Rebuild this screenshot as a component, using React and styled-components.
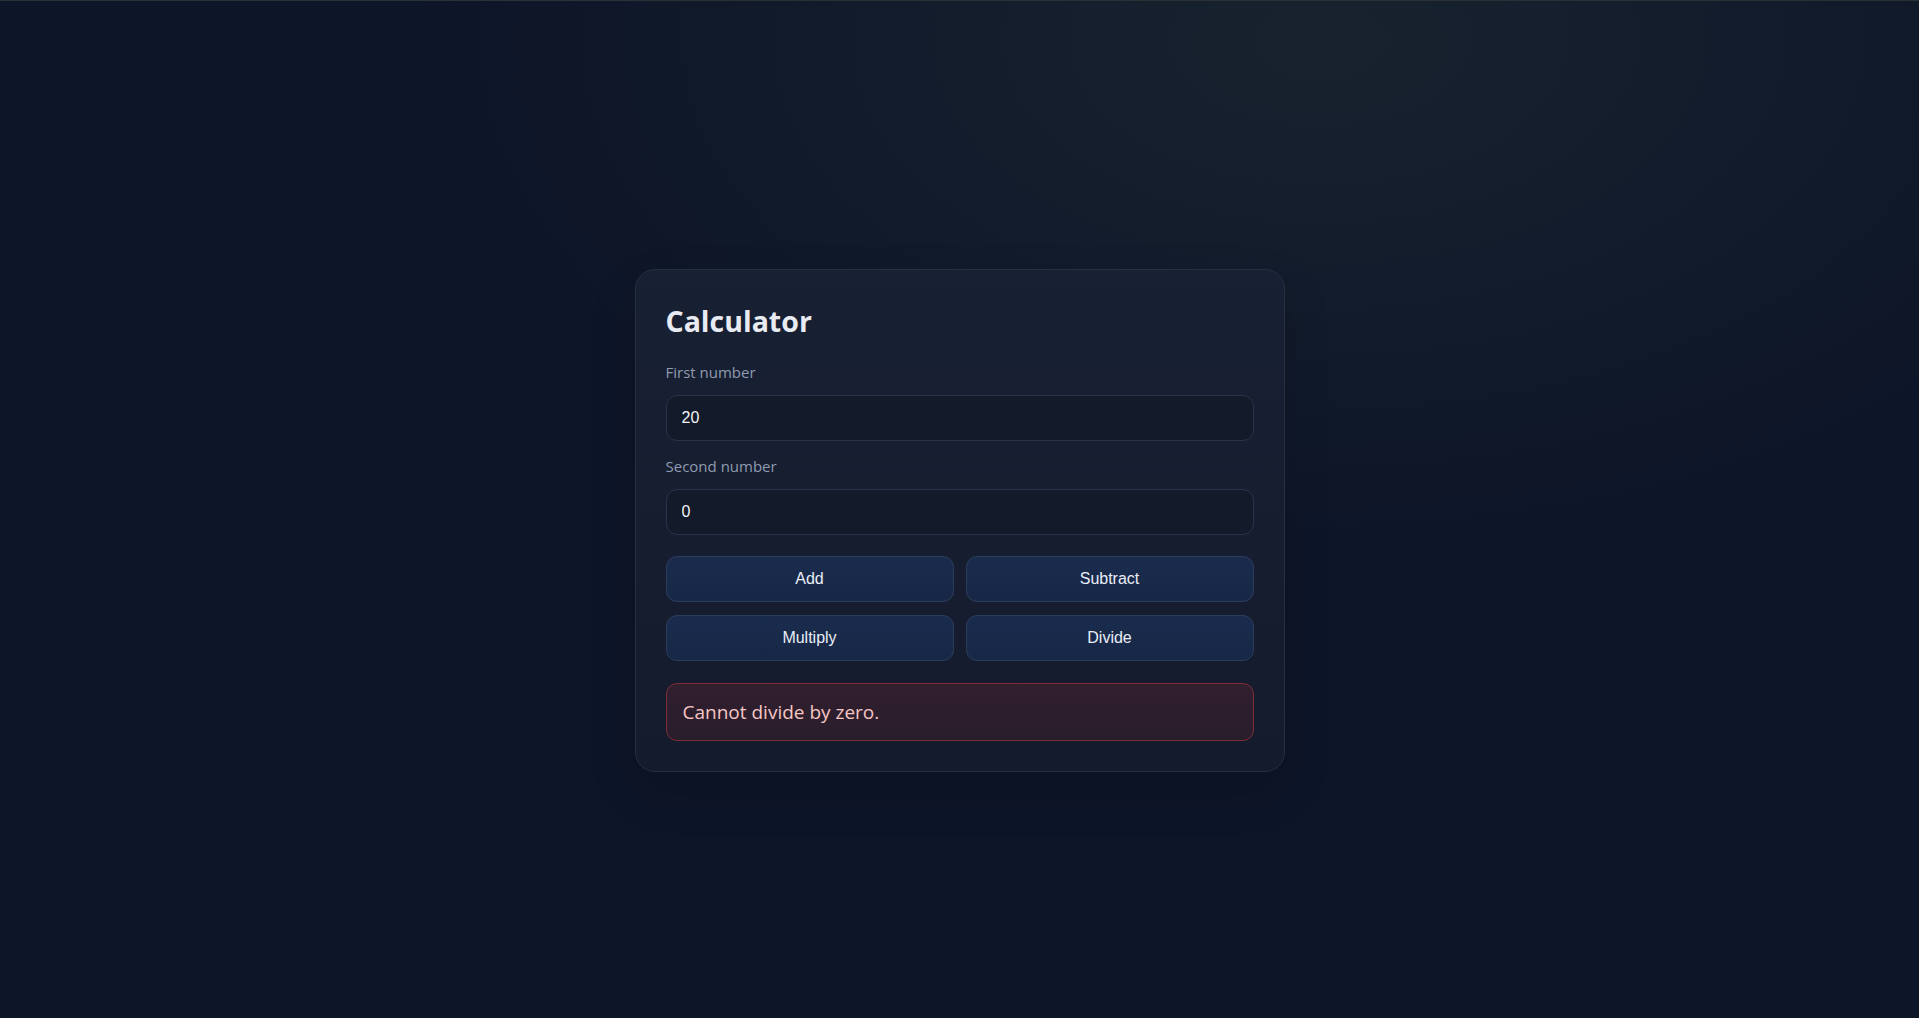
import React, { useState } from 'react';
import styled, { createGlobalStyle } from 'styled-components';

const GlobalStyle = createGlobalStyle`
  html, body {
    margin: 0;
    padding: 0;
  }
  body {
    min-height: 100vh;
    background-color: #0d1528;
    background-image: radial-gradient(ellipse 900px 520px at 1320px 40px, #18232f 0%, rgba(24, 35, 47, 0.55) 40%, rgba(13, 21, 40, 0) 100%);
    border-top: 1px solid #2b2f36;
    box-sizing: border-box;
    font-family: "Segoe UI", "Open Sans", "Noto Sans", sans-serif;
  }
  * {
    box-sizing: border-box;
  }
`;

const Page = styled.main`
  display: flex;
  justify-content: center;
  align-items: flex-start;
  padding-top: 268px;
  min-height: 100vh;
`;

const Card = styled.section`
  width: 650px;
  padding: 30px;
  border: 1px solid #252f40;
  border-radius: 20px;
  background: linear-gradient(180deg, #182033 0%, #141b2d 100%);
  box-shadow: 0 20px 50px rgba(0, 0, 0, 0.12);
`;

const Title = styled.h1`
  margin: 4px 0 24px;
  font-size: 28.5px;
  line-height: 34px;
  font-weight: 700;
  color: #e8ebf1;
`;

const Field = styled.div`
  display: flex;
  flex-direction: column;
  margin-bottom: ${p => p.$last ? '21px' : '15px'};
`;

const Label = styled.label`
  font-size: 15px;
  line-height: 20px;
  color: #8f9bb0;
  margin-bottom: 13px;
`;

const Input = styled.input`
  height: 46px;
  padding: 0 15px;
  border: 1px solid #2b3446;
  border-radius: 11px;
  background: #131a2a;
  color: #f1f4f9;
  font-family: "Liberation Sans", Arial, sans-serif;
  font-size: 16px;
  outline: none;
`;

const Buttons = styled.div`
  display: grid;
  grid-template-columns: 1fr 1fr;
  gap: 13px 12px;
  margin-bottom: 22px;
`;

const OpButton = styled.button`
  height: 46px;
  border: 1px solid #2c3d5b;
  border-radius: 11px;
  background: linear-gradient(180deg, #1a2c4e 0%, #172746 100%);
  color: #e9eef8;
  font-family: "Liberation Sans", Arial, sans-serif;
  font-size: 16px;
  cursor: pointer;
`;

const ErrorBox = styled.div`
  min-height: 58px;
  display: flex;
  align-items: center;
  padding: 0 16px;
  border: 1px solid #7c2d36;
  border-radius: 11px;
  background: linear-gradient(180deg, #311f2e 0%, #291d2c 100%);
  color: #f7c6c3;
  font-size: 19px;
`;

export default function App() {
  const [a, setA] = useState('20');
  const [b, setB] = useState('0');
  const [result, setResult] = useState({ error: 'Cannot divide by zero.' });

  const run = (op) => {
    const x = parseFloat(a);
    const y = parseFloat(b);
    if (op === 'div' && y === 0) {
      setResult({ error: 'Cannot divide by zero.' });
      return;
    }
    const value = op === 'add' ? x + y : op === 'sub' ? x - y : op === 'mul' ? x * y : x / y;
    setResult({ value });
  };

  return (
    <>
      <GlobalStyle />
      <Page>
        <Card>
          <Title>Calculator</Title>
          <Field>
            <Label>First number</Label>
            <Input value={a} onChange={e => setA(e.target.value)} />
          </Field>
          <Field $last>
            <Label>Second number</Label>
            <Input value={b} onChange={e => setB(e.target.value)} />
          </Field>
          <Buttons>
            <OpButton onClick={() => run('add')}>Add</OpButton>
            <OpButton onClick={() => run('sub')}>Subtract</OpButton>
            <OpButton onClick={() => run('mul')}>Multiply</OpButton>
            <OpButton onClick={() => run('div')}>Divide</OpButton>
          </Buttons>
          {result.error
            ? <ErrorBox>{result.error}</ErrorBox>
            : <ErrorBox>Result: {result.value}</ErrorBox>}
        </Card>
      </Page>
    </>
  );
}
